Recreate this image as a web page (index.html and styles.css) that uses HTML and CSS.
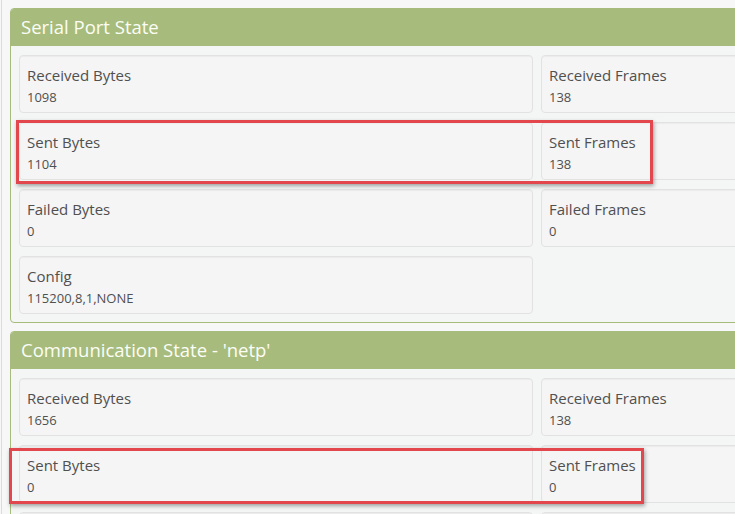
FILE: index.html
```html
<!DOCTYPE html>
<html>
<head>
<meta charset="utf-8">
<link rel="stylesheet" href="styles.css">
</head>
<body>
<div class="page">
  <section class="panel">
    <div class="panel-head">Serial Port State</div>
    <div class="panel-body">
      <div class="well"><div class="lbl">Received Bytes</div><div class="val">1098</div></div>
      <div class="well"><div class="lbl">Received Frames</div><div class="val">138</div></div>
      <div class="well"><div class="lbl">Sent Bytes</div><div class="val">1104</div></div>
      <div class="well"><div class="lbl">Sent Frames</div><div class="val">138</div></div>
      <div class="well"><div class="lbl">Failed Bytes</div><div class="val">0</div></div>
      <div class="well"><div class="lbl">Failed Frames</div><div class="val">0</div></div>
      <div class="well"><div class="lbl">Config</div><div class="val">115200,8,1,NONE</div></div>
    </div>
  </section>
  <section class="panel">
    <div class="panel-head">Communication State - 'netp'</div>
    <div class="panel-body">
      <div class="well"><div class="lbl">Received Bytes</div><div class="val">1656</div></div>
      <div class="well"><div class="lbl">Received Frames</div><div class="val">138</div></div>
      <div class="well"><div class="lbl">Sent Bytes</div><div class="val">0</div></div>
      <div class="well"><div class="lbl">Sent Frames</div><div class="val">0</div></div>
      <div class="well"><div class="lbl">Failed Bytes</div><div class="val">0</div></div>
      <div class="well"><div class="lbl">Failed Frames</div><div class="val">0</div></div>
    </div>
  </section>
  <div class="mark mark-a"></div>
  <div class="mark mark-b"></div>
</div>
</body>
</html>
```

FILE: styles.css
```css
html, body {
  margin: 0;
  padding: 0;
  background: #f7f7f7;
  overflow: hidden;
  width: 735px;
  height: 514px;
}
.page {
  position: relative;
  margin-left: 1px;
  border-left: 1px solid #dcdcdc;
  padding: 8px 0 0 8px;
  width: 1100px;
  font-family: "Open Sans", "Noto Sans", sans-serif;
  color: #505050;
}
.panel {
  width: 1054px;
  box-sizing: border-box;
  border: 1px solid #a7bc7c;
  border-radius: 4px;
  background: #f4f5f5;
  margin-bottom: 8px;
  overflow: hidden;
}
.panel-head {
  background: #a7bc7c;
  color: #fbfdf6;
  height: 37px;
  line-height: 35px;
  padding-left: 10px;
  font-size: 18.5px;
  margin-top: -1px;
  padding-top: 1px;
}
.panel-body {
  display: grid;
  grid-template-columns: 514px 514px;
  column-gap: 8px;
  row-gap: 9px;
  padding: 9px 8px 8px 8px;
}
.well {
  height: 58px;
  box-sizing: border-box;
  background: #f5f5f5;
  border: 1px solid #e2e2e2;
  border-radius: 4px;
  box-shadow: inset 0 1px 1px rgba(0,0,0,0.04);
  padding: 8px 7px 0 7px;
}
.lbl {
  font-size: 15px;
  line-height: 22px;
}
.val {
  font-size: 13px;
  line-height: 22px;
}
.mark {
  position: absolute;
  border: 3px solid #e2474e;
  box-shadow: 1px 2px 4px rgba(0,0,0,0.35);
  box-sizing: border-box;
}
.mark-a {
  left: 14px;
  top: 120px;
  width: 637px;
  height: 64px;
}
.mark-b {
  left: 7px;
  top: 448px;
  width: 635px;
  height: 56px;
}
```
